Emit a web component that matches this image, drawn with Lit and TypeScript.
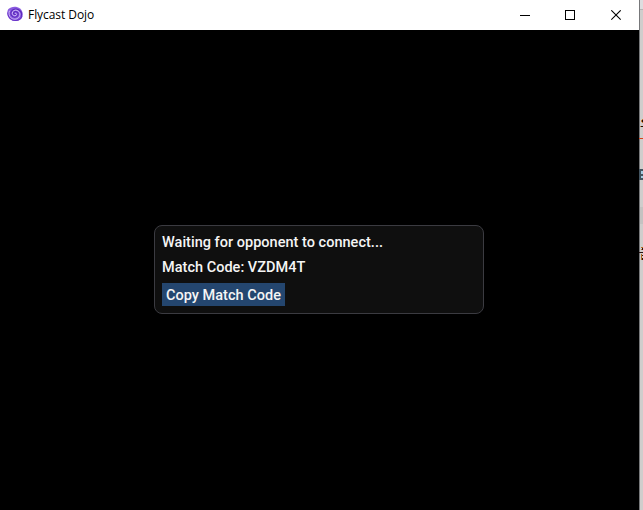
import { LitElement, html, css } from "lit";
import { customElement, property } from "lit/decorators.js";

@customElement("title-bar")
export class TitleBar extends LitElement {
    static styles = css`
        :host {
            display: flex;
            align-items: center;
            height: 30px;
            background: #fff;
            color: #000;
        }

        .logo {
            width: 16px;
            height: 16px;
            margin: 0 5px 2px 7px;
        }

        .title {
            flex: 1;
            font: 12px/16px "Open Sans", "Noto Sans", sans-serif;
            letter-spacing: -0.06px;
            white-space: nowrap;
        }

        .controls {
            display: flex;
        }

        .control {
            display: flex;
            align-items: center;
            justify-content: center;
            width: 45px;
            height: 28px;
            padding: 0;
            border: 0;
            background: none;
        }

        .control.close {
            width: 46px;
            padding-left: 1px;
        }
    `;

    @property() heading = "";

    render() {
        return html`
            <svg class="logo" viewBox="0 0 16 16" fill="none">
                <path
                    d="M1.2 3.2C4 0.2 9.5 -0.2 13 2.4C16.2 5 16.7 9.6 14.2 12.6C11.5 15.7 6.3 15.8 3 13.2C0.3 10.9 -0.6 6.4 1.2 3.2Z"
                    fill="#8a5be0"
                />
                <path
                    d="M0.8 6.5C0.8 11 4.5 14.6 9 14.4C12 14.2 14 12.6 14.9 10.2"
                    stroke="#6a35c8"
                    stroke-width="1.2"
                />
                <path
                    d="M8.8 8.2C8 9.2 6.3 8.4 6.6 7C7 5.2 9.9 5.1 10.8 6.8C11.9 9.2 9.8 11.4 7.6 11.2C4.6 11 3.2 8.2 4.1 5.9C5.2 3.2 8.8 2.2 11.6 3.7C14 5 15 7.9 14.1 10.4"
                    stroke="#5c2abb"
                    stroke-width="1.1"
                />
                <path
                    d="M8 7.4C9.2 6.8 10 8.3 9 9.3C7.7 10.4 5.4 9.4 5.3 7.4C5.2 4.9 7.8 3.6 10 4.4C12.9 5.5 13.7 8.8 12 11.1C10 13.8 6 13.7 3.9 11.8C1.9 10 1.5 7 2.6 4.7"
                    stroke="#dfd0fb"
                    stroke-width="0.75"
                />
            </svg>
            <span class="title">${this.heading}</span>
            <div class="controls">
                <button class="control" aria-label="Minimize">
                    <svg width="11" height="11" shape-rendering="crispEdges">
                        <path d="M0 5.5H10" stroke="#000" />
                    </svg>
                </button>
                <button class="control" aria-label="Maximize">
                    <svg width="11" height="11" shape-rendering="crispEdges">
                        <rect x="0.5" y="0.5" width="9" height="9" fill="none" stroke="#000" />
                    </svg>
                </button>
                <button class="control close" aria-label="Close">
                    <svg width="11" height="11">
                        <path d="M0.3 0.3L9.7 9.7M9.7 0.3L0.3 9.7" stroke="#000" stroke-width="1.1" />
                    </svg>
                </button>
            </div>
        `;
    }
}

@customElement("match-dialog")
export class MatchDialog extends LitElement {
    static styles = css`
        :host {
            display: flex;
            flex-direction: column;
            align-items: flex-start;
            box-sizing: border-box;
            width: 330px;
            height: 89px;
            padding: 8px 7px 7px;
            border: 1px solid #3b3b41;
            border-radius: 8px;
            background: #0f0f0f;
            color: #f5f5f5;
            font: 500 14.5px/17px Roboto, sans-serif;
            letter-spacing: 0.02px;
            white-space: nowrap;
        }

        .line {
            margin-bottom: 8px;
        }

        .copy {
            width: 123px;
            height: 23px;
            margin-top: -1px;
            padding: 1px 0 0 4px;
            border: 0;
            background: #24466f;
            color: inherit;
            font: inherit;
            letter-spacing: inherit;
            line-height: 24px;
            text-align: left;
        }
    `;

    @property() code = "";

    render() {
        return html`
            <div class="line">Waiting for opponent to connect...</div>
            <div class="line">Match Code: ${this.code}</div>
            <button class="copy">Copy Match Code</button>
        `;
    }
}

@customElement("app-root")
export class AppRoot extends LitElement {
    static styles = css`
        :host {
            display: flex;
            width: 643px;
            height: 510px;
            overflow: hidden;
            background: #000;
        }

        .window {
            display: flex;
            flex-direction: column;
            width: 639px;
        }

        .screen {
            display: flex;
            flex: 1;
            justify-content: center;
            align-items: flex-start;
            padding: 195px 1px 0 0;
            background: #000;
        }

        .desktop {
            width: 4px;
            height: 510px;
        }
    `;

    render() {
        return html`
            <div class="window">
                <title-bar heading="Flycast Dojo"></title-bar>
                <div class="screen">
                    <match-dialog code="VZDM4T"></match-dialog>
                </div>
            </div>
            <svg class="desktop" viewBox="0 0 4 510" shape-rendering="crispEdges">
                <rect width="4" height="510" fill="#cfcdcc" />
                <rect width="4" height="9" fill="#dddddf" />
                <rect y="9" width="4" height="1" fill="#b5b5b5" />
                <rect y="207" width="4" height="17" fill="#c4c2c1" />
                <rect width="1" height="510" fill="#77787a" />
                <rect y="169" width="4" height="11" fill="#435460" />
                <path d="M2 171h2v3h-2zM2 176h2v2h-2z" fill="#a5cbe0" />
                <path d="M0 138h4v1h-4z" fill="#d8431c" />
                <path d="M3 119h1v1h-1zM2 120h1v2h-1zM3 122h1v1h-1zM1 126h1v1h-1z" fill="#c9792f" />
                <path d="M3 120h1v2h-1zM2 126h2v1h-2z" fill="#1a0d08" />
                <path d="M2 247h2v1h-2zM2 249h1v1h-1zM2 254h1v6h-1z" fill="#b66b24" />
                <path d="M3 248h1v2h-1zM0 252h4v1h-4zM3 255h1v1h-1zM3 258h1v2h-1z" fill="#2a1210" />
            </svg>
        `;
    }
}
